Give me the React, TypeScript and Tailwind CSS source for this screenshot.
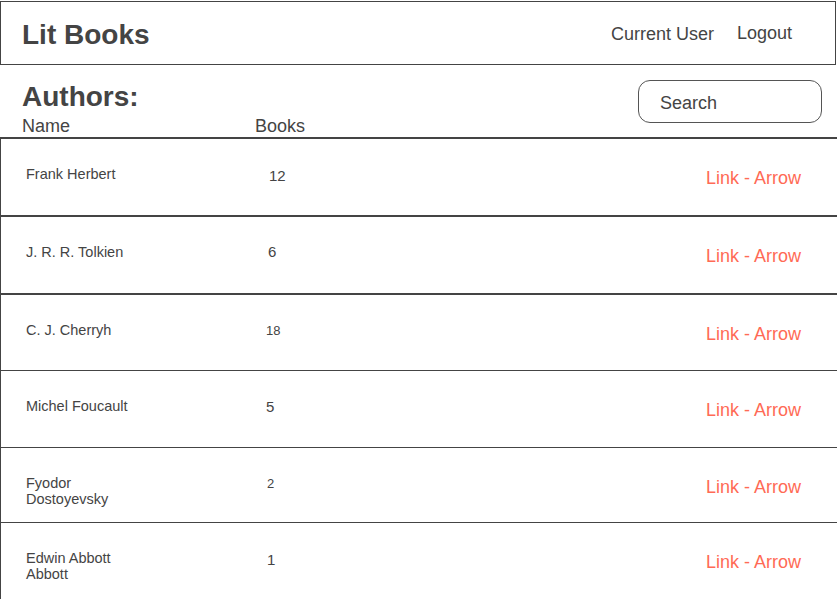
const authors = [
  { name: "Frank Herbert", books: "12", numCls: "pl-[3px] pt-[29px] text-[15px]", rowCls: "border-t-2 h-[78px]" },
  { name: "J. R. R. Tolkien", books: "6", numCls: "pl-[2px] pt-[27px] text-[15px]", rowCls: "border-t-2 h-[78px]" },
  { name: "C. J. Cherryh", books: "18", numCls: "pl-0 pt-[28px] text-[13px]", rowCls: "border-t-2 h-[77px]" },
  { name: "Michel Foucault", books: "5", numCls: "pl-0 pt-[28px] text-[15px]", rowCls: "border-t h-[77px]" },
  { name: "Fyodor Dostoyevsky", books: "2", numCls: "pl-px pt-[28px] text-[13px]", rowCls: "border-t h-[75px]" },
  { name: "Edwin Abbott Abbott", books: "1", numCls: "pl-px pt-[29px] text-[15px]", rowCls: "border-t h-[77px]" },
]

function Header() {
  return (
    <header className="mt-px flex h-[64px] w-[836px] items-start justify-between border border-[#444]">
      <div className="pl-[21px] pt-[17px] text-[28px] font-bold leading-[32px]">Lit Books</div>
      <nav className="flex items-start pr-[43px] text-[18px] leading-[21px]">
        <span className="pt-[22px]">Current User</span>
        <span className="ml-[23px] pt-[21px]">Logout</span>
      </nav>
    </header>
  )
}

export default function App() {
  return (
    <div
      className="h-[600px] w-[837px] overflow-hidden bg-white text-[#444]"
      style={{ fontFamily: '"Liberation Sans", Arial, sans-serif' }}
    >
      <Header />

      <section className="flex h-[72px] items-start justify-between pl-[22px] pr-[15px]">
        <div className="pt-[16px]">
          <h1 className="text-[28px] font-bold leading-[32px]">Authors:</h1>
          <div className="mt-[3px] flex text-[18px] leading-[21px]">
            <span className="w-[233px]">Name</span>
            <span>Books</span>
          </div>
        </div>
        <div className="mt-[15px] flex h-[43px] w-[184px] items-center rounded-[12px] border border-[#555] pl-[21px] pt-[3px] text-[18px]">
          Search
        </div>
      </section>

      <div className="border-l border-[#444]">
        {authors.map((a) => (
          <div key={a.name} className={`flex items-start border-[#444] pl-[25px] ${a.rowCls}`}>
            <div className="w-[240px] pt-[27px]">
              <p className="w-[112px] text-[14.5px] leading-[16px]">{a.name}</p>
            </div>
            <div className={`leading-[16px] ${a.numCls}`}>{a.books}</div>
            <a className="ml-auto pr-[36px] pt-[29px] text-[18px] leading-[21px] text-[#ff6a55]">Link - Arrow</a>
          </div>
        ))}
      </div>
    </div>
  )
}
